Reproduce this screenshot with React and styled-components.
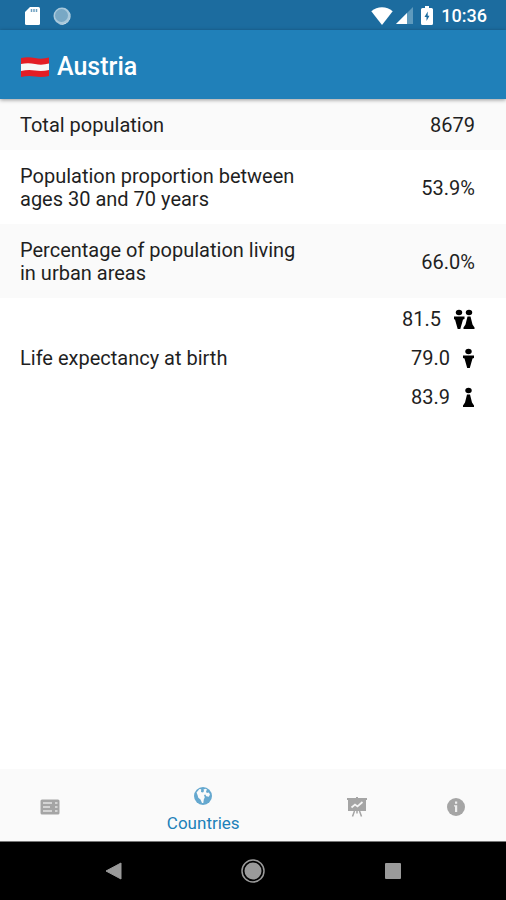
import React from 'react';
import styled, { createGlobalStyle } from 'styled-components';

const colorPrimary = '#2080b9';
const colorPrimaryDark = '#1c6c9f';
const colorText = '#1f1f1f';
const colorMuted = '#a5a5a5';
const colorStripe = '#fafafa';
const colorWhite = '#fff';

const GlobalStyle = createGlobalStyle`
  body {
    margin: 0;
    background: ${colorWhite};
    color: ${colorText};
    font-family: Roboto, 'Liberation Sans', sans-serif;
  }

  * {
    box-sizing: border-box;
  }
`;

const Screen = styled.div`
  display: flex;
  flex-direction: column;
  min-height: 100vh;
`;

const StatusBar = styled.div`
  display: flex;
  justify-content: space-between;
  align-items: center;
  height: 30px;
  padding: 1px 19px 0 24px;
  background: ${colorPrimaryDark};
  color: ${colorWhite};
`;

const StatusGroup = styled.div`
  display: flex;
  align-items: center;
  gap: ${props => props.$gap}px;
`;

const Clock = styled.time`
  font-size: 18px;
  font-weight: 500;
  line-height: 20px;
`;

const AppBar = styled.header`
  display: flex;
  align-items: center;
  gap: 7px;
  height: 69px;
  padding: 4px 20px 0;
  background: ${colorPrimary};
  box-shadow: 0 1px 4px rgba(0, 0, 0, 0.4);
  z-index: 1;
`;

const Title = styled.h1`
  margin: 0;
  color: ${colorWhite};
  font-size: 25px;
  font-weight: 500;
  line-height: 32px;
`;

const Main = styled.main`
  flex: 1;
`;

const StatsTable = styled.table`
  width: 100%;
  border-collapse: collapse;
  font-size: 20px;
  line-height: 23px;
`;

const StatRow = styled.tr`
  background: ${props => (props.$striped ? colorStripe : colorWhite)};
`;

const Label = styled.th`
  width: 62%;
  padding: 15px 0 13px 20px;
  font-weight: 400;
  text-align: left;
`;

const Value = styled.td`
  padding: 2px 31px 0 0;
  text-align: right;
`;

const GenderList = styled.ul`
  margin: 0;
  padding: 0;
  list-style: none;
`;

const GenderItem = styled.li`
  display: flex;
  justify-content: flex-end;
  align-items: center;
  gap: 13px;
  height: 39px;
`;

const TabBar = styled.nav`
  display: flex;
  height: 73px;
  background: ${colorStripe};
  border-bottom: 1px solid #777;
`;

const Tab = styled.button`
  display: flex;
  flex: ${props => (props.$active ? '0 0 41%' : '1 1 0')};
  flex-direction: column;
  align-items: center;
  justify-content: center;
  gap: 8px;
  padding: ${props => (props.$active ? 10 : 3)}px 0 0;
  border: 0;
  background: none;
  color: ${props => (props.$active ? colorPrimary : colorMuted)};
  font-family: inherit;
  font-size: 17px;
  line-height: 20px;
`;

const SystemBar = styled.nav`
  display: flex;
  justify-content: center;
  align-items: center;
  gap: 92px;
  height: 58px;
  background: #000;
`;

const SystemButton = styled.button`
  display: flex;
  justify-content: center;
  width: 48px;
  padding: 0;
  border: 0;
  background: none;
  color: #9a9a9a;
`;

const SdCardIcon = () => (
  <svg width="17" height="20" viewBox="0 0 17 20" fill="none">
    <path d="M6 1h8.500q1.500 0 1.500 1.500v15q0 1.500-1.500 1.500h-12Q1 19 1 17.500V6z" fill="#fff" />
    <path d="M7.500 3v3M10 3v3M12.500 3v3" stroke="#6d9fc0" strokeWidth="1.500" />
  </svg>
);

const SyncIcon = () => (
  <svg width="18" height="18" viewBox="0 0 18 18">
    <circle cx="9" cy="9" r="8.500" fill="#a9c9dc" />
    <path d="M16.500 5A8.500 8.500 0 0 1 5 16.500 9 9 0 0 0 17.500 9z" fill="#fff" />
    <circle cx="8.500" cy="8.500" r="6.500" fill="#78a8c5" />
  </svg>
);

const WifiIcon = () => (
  <svg width="22" height="18" viewBox="0 0 22 18">
    <path d="M11 18 .3 4.200Q5 .3 11 .3t10.700 3.900z" fill="#fff" />
  </svg>
);

const SignalIcon = () => (
  <svg width="17" height="17" viewBox="0 0 17 17">
    <path d="M17 0v17H0z" fill="#5e9abd" />
    <path d="M11 6v11H0z" fill="#fff" />
  </svg>
);

const BatteryIcon = () => (
  <svg width="12" height="19" viewBox="0 0 12 19">
    <path d="M4 0h4v2h2.500Q12 2 12 3.500v14q0 1.500-1.500 1.500h-9Q0 19 0 17.500v-14Q0 2 1.500 2H4z" fill="#fff" />
    <path d="M6.700 5.500 3.500 11h2v4L8.500 9.800H6.700z" fill={colorPrimaryDark} />
  </svg>
);

const FlagIcon = () => (
  <svg width="30" height="22" viewBox="0 0 30 22" role="img" aria-label="Flag of Austria">
    <path d="M1 2q7-1.500 14 0t14-.5v18.500q-7 1.500-14 .500t-14 .5z" fill="#e31d25" />
    <path d="M1 8q7-1.500 14 0t14-.5V14q-7 1.500-14 .5t-14 .5z" fill="#f7f7f7" />
  </svg>
);

const malePath = 'M0 7.500h11v2.500l-1.500.5L6.800 20H4.200L1.500 10.500 0 10z';
const femalePath = 'M4 7.500h3l2 8 2 3V20H0v-1.500l2-3z';

const MaleIcon = () => (
  <svg width="12" height="21" viewBox="0 0 12 21">
    <ellipse cx="5.500" cy="3.500" rx="3.200" ry="2.800" />
    <path d={malePath} />
  </svg>
);

const FemaleIcon = () => (
  <svg width="12" height="21" viewBox="0 0 12 21">
    <ellipse cx="5.500" cy="3.500" rx="3.200" ry="2.800" />
    <path d={femalePath} />
  </svg>
);

const BothIcon = () => (
  <svg width="21" height="21" viewBox="0 0 21 21">
    <ellipse cx="5" cy="3.500" rx="3.200" ry="2.800" />
    <path d={malePath} transform="translate(-.5)" />
    <ellipse cx="15" cy="3.500" rx="3.200" ry="2.800" />
    <path d={femalePath} transform="translate(9.500)" />
  </svg>
);

const NewsIcon = () => (
  <svg width="20" height="16" viewBox="0 0 20 16">
    <rect x=".5" y=".5" width="19" height="15" rx="1.500" fill="currentColor" />
    <path
      d="M3 4h9M3 12h9M3 8h7M15 4h2.500M15 8h2.500M15 12h2.500"
      stroke="#e4e4e4"
      strokeWidth="1.700"
    />
  </svg>
);

const GlobeIcon = () => (
  <svg width="18" height="18" viewBox="0 0 18 18">
    <circle cx="9" cy="9" r="9" fill="#65a8cf" />
    <path
      d="M2.500 5.500 5.500 2l1.700.3L7 5l2 .5 1-1.500-.5-1.500 2-.7 1.500.7-1 2 .8 1.500 2-.5 1.200 2-1.200 2.200-2.500-.4-1-1.800-1.300.5.800 2.300-1 2.200-.5 3.500H8l-1.500-3.500-2.200-1.800L3.500 8z"
      fill="#fafafa"
    />
  </svg>
);

const PresentationIcon = () => (
  <svg width="20" height="20" viewBox="0 0 20 20" fill="none">
    <path d="M9 0h2v1h9v2h-1v11H1V3H0V1h9z" fill="currentColor" />
    <path d="m7.500 14-2 5.500M12.500 14l2 5.500M10 14v2.500" stroke="currentColor" strokeWidth="1.500" />
    <path d="m4.500 10.500 3.500-3 2.500 2 5-4.500" stroke="#f5f5f5" strokeWidth="1.700" />
  </svg>
);

const InfoIcon = () => (
  <svg width="18" height="18" viewBox="0 0 18 18">
    <circle cx="9" cy="9" r="9" fill="currentColor" />
    <path d="M8 3.500h2.200v2.200H8zM7 7.200h3.200v6.800H8V8.500H7z" fill="#eee" />
  </svg>
);

const BackIcon = () => (
  <svg width="17" height="18" viewBox="0 0 17 18">
    <path d="M16 1v16L1 9z" fill="currentColor" stroke="currentColor" strokeLinejoin="round" />
  </svg>
);

const HomeIcon = () => (
  <svg width="24" height="24" viewBox="0 0 24 24">
    <circle cx="12" cy="12" r="11" fill="none" stroke="currentColor" strokeWidth="1.500" />
    <circle cx="12" cy="12" r="8.500" fill="currentColor" />
  </svg>
);

const RecentsIcon = () => (
  <svg width="16" height="16" viewBox="0 0 16 16">
    <rect width="16" height="16" rx="1" fill="currentColor" />
  </svg>
);

const stats = [
  { label: 'Total population', value: '8679' },
  { label: ['Population proportion between', 'ages 30 and 70 years'], value: '53.9%' },
  { label: ['Percentage of population living', 'in urban areas'], value: '66.0%' },
];

const lifeExpectancy = [
  { value: '81.5', Icon: BothIcon },
  { value: '79.0', Icon: MaleIcon },
  { value: '83.9', Icon: FemaleIcon },
];

const tabs = [
  { name: 'News', Icon: NewsIcon },
  { name: 'Countries', Icon: GlobeIcon, active: true },
  { name: 'Charts', Icon: PresentationIcon },
  { name: 'About', Icon: InfoIcon },
];

const StatLabel = ({ text }) =>
  Array.isArray(text) ? (
    <>
      {text[0]}
      <br />
      {text[1]}
    </>
  ) : (
    text
  );

const App = () => (
  <Screen>
    <GlobalStyle />
    <StatusBar>
      <StatusGroup $gap={12}>
        <SdCardIcon />
        <SyncIcon />
      </StatusGroup>
      <StatusGroup $gap={8}>
        <StatusGroup $gap={3}>
          <WifiIcon />
          <SignalIcon />
        </StatusGroup>
        <BatteryIcon />
        <Clock>10:36</Clock>
      </StatusGroup>
    </StatusBar>
    <AppBar>
      <FlagIcon />
      <Title>Austria</Title>
    </AppBar>
    <Main>
      <StatsTable>
        <tbody>
          {stats.map(({ label, value }, i) => (
            <StatRow key={value} $striped={i % 2 === 0}>
              <Label scope="row">
                <StatLabel text={label} />
              </Label>
              <Value>{value}</Value>
            </StatRow>
          ))}
          <StatRow>
            <Label scope="row">Life expectancy at birth</Label>
            <Value>
              <GenderList>
                {lifeExpectancy.map(({ value, Icon }) => (
                  <GenderItem key={value}>
                    {value}
                    <Icon />
                  </GenderItem>
                ))}
              </GenderList>
            </Value>
          </StatRow>
        </tbody>
      </StatsTable>
    </Main>
    <TabBar>
      {tabs.map(({ name, Icon, active }) => (
        <Tab key={name} $active={active} aria-label={name}>
          <Icon />
          {active && name}
        </Tab>
      ))}
    </TabBar>
    <SystemBar>
      <SystemButton aria-label="Back">
        <BackIcon />
      </SystemButton>
      <SystemButton aria-label="Home">
        <HomeIcon />
      </SystemButton>
      <SystemButton aria-label="Recent apps">
        <RecentsIcon />
      </SystemButton>
    </SystemBar>
  </Screen>
);

export default App;
